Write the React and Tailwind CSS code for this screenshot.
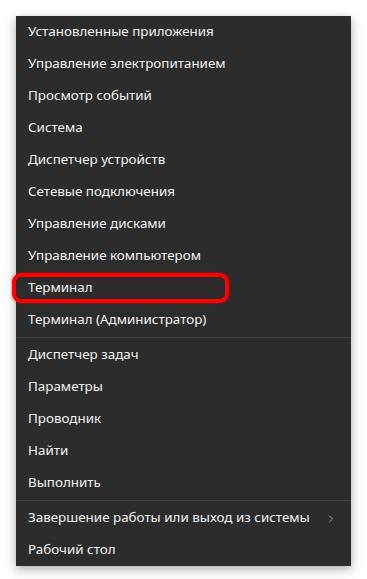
import React from "react";
import { ChevronRight } from "lucide-react";

const groups = [
  [
    "Установленные приложения",
    "Управление электропитанием",
    "Просмотр событий",
    "Система",
    "Диспетчер устройств",
    "Сетевые подключения",
    "Управление дисками",
    "Управление компьютером",
    "Терминал",
    "Терминал (Администратор)",
  ],
  ["Диспетчер задач", "Параметры", "Проводник", "Найти", "Выполнить"],
  ["Завершение работы или выход из системы", "Рабочий стол"],
];

const MenuItem = ({ label }) => {
  const hasSub = label.startsWith("Завершение");
  const marked = label === "Терминал";
  return (
    <div className="relative h-8 flex items-center justify-between pl-3 pr-3.5 pb-px text-[13.4px] text-[#f3f3f3]">
      <span>{label}</span>
      {hasSub && <ChevronRight size={12} strokeWidth={1.5} className="text-[#c8c8c8] mt-0.5" />}
      {marked && (
        <div className="absolute left-[-4px] top-px w-[217px] h-[30px] rounded-[9px] border-[4.5px] border-[#ff0000] shadow-[0_0_3px_rgba(255,0,0,0.6)]" />
      )}
    </div>
  );
};

export default function App() {
  return (
    <div className="w-[367px] h-[579px] bg-white p-4" style={{ fontFamily: '"Noto Sans", "Open Sans", sans-serif' }}>
      <div className="w-[335px] bg-[#2c2c2c] shadow-[0_3px_10px_rgba(0,0,0,0.35)]">
        {groups.map((items, gi) => (
          <div key={gi}>
            {gi > 0 && (
              <div className="py-px">
                <div className="h-px bg-[#3e3e3e]" />
              </div>
            )}
            {items.map((label) => (
              <MenuItem key={label} label={label} />
            ))}
          </div>
        ))}
      </div>
    </div>
  );
}
